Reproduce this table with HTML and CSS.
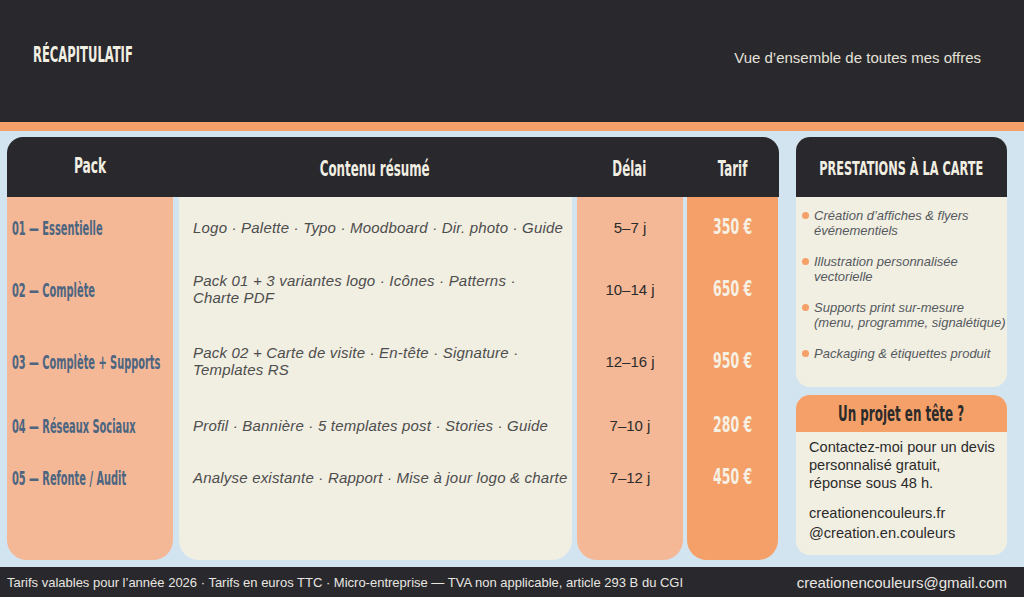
FILE: index.html
```html
<!DOCTYPE html>
<html lang="fr">
<head>
<meta charset="utf-8">
<title>Récapitulatif</title>
<link rel="stylesheet" href="styles.css">
</head>
<body>
<header class="top">
  <h1 class="title"><span class="cond left">RÉCAPITULATIF</span></h1>
  <p class="subtitle">Vue d’ensemble de toutes mes offres</p>
</header>
<div class="stripe"></div>
<main class="main">
  <section class="table">
    <div class="thead">
      <div class="th th-pack"><span class="cond">Pack</span></div>
      <div class="th"><span class="cond">Contenu résumé</span></div>
      <div class="th"><span class="cond">Délai</span></div>
      <div class="th"><span class="cond">Tarif</span></div>
    </div>
    <div class="tbody">
      <div class="col col-pack">
        <div class="cell r1"><span class="cond left pack">01 — Essentielle</span></div>
        <div class="cell r2"><span class="cond left pack">02 — Complète</span></div>
        <div class="cell r3"><span class="cond left pack">03 — Complète + Supports</span></div>
        <div class="cell r4"><span class="cond left pack">04 — Réseaux Sociaux</span></div>
        <div class="cell r5"><span class="cond left pack">05 — Refonte / Audit</span></div>
      </div>
      <div class="col col-content">
        <div class="cell r1">Logo · Palette · Typo · Moodboard · Dir. photo · Guide</div>
        <div class="cell r2">Pack 01 + 3 variantes logo · Icônes · Patterns ·<br>Charte PDF</div>
        <div class="cell r3">Pack 02 + Carte de visite · En-tête · Signature ·<br>Templates RS</div>
        <div class="cell r4">Profil · Bannière · 5 templates post · Stories · Guide</div>
        <div class="cell r5">Analyse existante · Rapport · Mise à jour logo &amp; charte</div>
      </div>
      <div class="col col-delai">
        <div class="cell r1">5–7 j</div>
        <div class="cell r2">10–14 j</div>
        <div class="cell r3">12–16 j</div>
        <div class="cell r4">7–10 j</div>
        <div class="cell r5">7–12 j</div>
      </div>
      <div class="col col-tarif">
        <div class="cell r1"><span class="cond price">350 €</span></div>
        <div class="cell r2"><span class="cond price">650 €</span></div>
        <div class="cell r3"><span class="cond price">950 €</span></div>
        <div class="cell r4"><span class="cond price">280 €</span></div>
        <div class="cell r5"><span class="cond price">450 €</span></div>
      </div>
    </div>
  </section>
  <aside class="side">
    <section class="card card-carte">
      <div class="card-head dark"><span class="cond head">PRESTATIONS À LA CARTE</span></div>
      <ul class="list">
        <li>Création d’affiches &amp; flyers<br>événementiels</li>
        <li>Illustration personnalisée<br>vectorielle</li>
        <li>Supports print sur-mesure<br>(menu, programme, signalétique)</li>
        <li>Packaging &amp; étiquettes produit</li>
      </ul>
    </section>
    <section class="card card-contact">
      <div class="card-head orange"><span class="cond head">Un projet en tête ?</span></div>
      <div class="contact">
        <p>Contactez-moi pour un devis<br>personnalisé gratuit,<br>réponse sous 48 h.</p>
        <p class="links">creationencouleurs.fr<br>@creation.en.couleurs</p>
      </div>
    </section>
  </aside>
</main>
<footer class="foot">
  <span class="foot-note">Tarifs valables pour l’année 2026 · Tarifs en euros TTC · Micro-entreprise — TVA non applicable, article 293 B du CGI</span>
  <span class="foot-mail">creationencouleurs@gmail.com</span>
</footer>
</body>
</html>
```

FILE: styles.css
```css
* { box-sizing: border-box; margin: 0; padding: 0; }

html, body {
  width: 1024px;
  height: 597px;
  overflow: hidden;
}

body {
  background: #d3e4f1;
  font-family: "Liberation Sans", Arial, sans-serif;
  color: #2b2b2b;
}

.cond {
  display: inline-block;
  font-family: "Liberation Sans Narrow", "DejaVu Sans Condensed", sans-serif;
  font-weight: bold;
  transform: scaleX(0.6);
  transform-origin: center;
  white-space: nowrap;
}
.cond.left { transform-origin: left center; }

/* header */
.top {
  height: 122px;
  background: #29282d;
  display: flex;
  justify-content: space-between;
  align-items: flex-start;
  padding: 40px 43px 0 33px;
}
.title {
  font-size: 22px;
  line-height: 30px;
  color: #f1eee2;
  font-weight: normal;
}
.title .cond { transform: scaleX(0.585); }
.subtitle {
  margin-top: 8px;
  font-size: 15px;
  line-height: 20px;
  color: #e4e1d8;
}
.stripe {
  height: 9px;
  background: #f4a068;
}

/* main */
.main {
  height: 436px;
  padding: 6px 17px 7px 7px;
  display: flex;
  gap: 17px;
}

.table {
  width: 772px;
  display: flex;
  flex-direction: column;
}
.thead {
  height: 60px;
  background: #29282d;
  border-radius: 16px 16px 0 0;
  display: grid;
  grid-template-columns: 166px 393px 106px 91px;
  column-gap: 5px;
}
.th {
  display: flex;
  align-items: center;
  justify-content: center;
  font-size: 22px;
  color: #f1eee2;
  padding-top: 2px;
}
.th-pack { padding-top: 0; padding-bottom: 3px; }
.th-pack .cond { transform: scaleX(0.62); }

.tbody {
  flex: 1;
  display: grid;
  grid-template-columns: 166px 393px 106px 91px;
  column-gap: 5px;
}
.col {
  border-radius: 0 0 20px 20px;
  display: flex;
  flex-direction: column;
}
.col-pack { background: #f4b897; }
.col-content { background: #f1eee2; margin-left: 1px; margin-right: -1px; }
.col-delai { background: #f4b897; margin-left: 1px; margin-right: -1px; }
.col-tarif { background: #f4a068; }

.cell {
  display: flex;
  align-items: center;
}
.r1 { height: 60px; }
.r2 { height: 64px; }
.r3 { height: 80px; }
.r4 { height: 48px; }
.r5 { height: 56px; }

.col-pack .cell { padding-left: 5px; padding-top: 2px; }
.pack {
  font-size: 19px;
  color: #4c6580;
}
.cond.pack { transform: scaleX(0.575); }
.col-content .cell {
  padding-left: 14px;
  font-style: italic;
  font-size: 15px;
  line-height: 17px;
  letter-spacing: 0.2px;
  color: #4d4d4d;
  white-space: nowrap;
}
.col-delai .cell {
  justify-content: center;
  font-size: 15px;
  color: #2b2b2b;
}
.col-tarif .cell { justify-content: center; }
.cond.price {
  font-size: 21px;
  color: #f6f1e4;
  transform: scaleX(0.66);
}

/* side */
.side {
  width: 211px;
  display: flex;
  flex-direction: column;
  gap: 8px;
}
.card {
  background: #f1eee2;
  border-radius: 14px;
  overflow: hidden;
}
.card-carte { height: 250px; }
.card-contact { height: 160px; }
.card-head {
  display: flex;
  align-items: center;
  justify-content: center;
}
.card-head .cond.head { transform: scaleX(0.63); }
.card-head.dark {
  height: 60px;
  background: #29282d;
  color: #f1eee2;
  font-size: 20px;
  padding-top: 2px;
}
.card-head.orange {
  height: 37px;
  background: #f4a068;
  color: #2b2b2b;
  font-size: 21px;
}

.list {
  list-style: none;
  padding: 11px 4px 0 6px;
}
.list li {
  position: relative;
  padding-left: 12px;
  font-style: italic;
  font-size: 13px;
  line-height: 15px;
  color: #555a5e;
  margin-bottom: 16px;
  white-space: nowrap;
}
.list li::before {
  content: "";
  position: absolute;
  left: 0;
  top: 4px;
  width: 7px;
  height: 7px;
  border-radius: 50%;
  background: #f4a068;
}

.contact {
  padding: 6px 4px 0 13px;
  font-size: 14.6px;
  line-height: 18px;
  color: #2b2b2b;
  white-space: nowrap;
}
.contact .links {
  margin-top: 11px;
  line-height: 20px;
}

/* footer */
.foot {
  height: 30px;
  background: #29282d;
  display: flex;
  justify-content: space-between;
  align-items: center;
  padding: 0 17px 0 7px;
  color: #e8e6e0;
  white-space: nowrap;
}
.foot-note { font-size: 13px; }
.foot-mail { font-size: 15px; }
```
